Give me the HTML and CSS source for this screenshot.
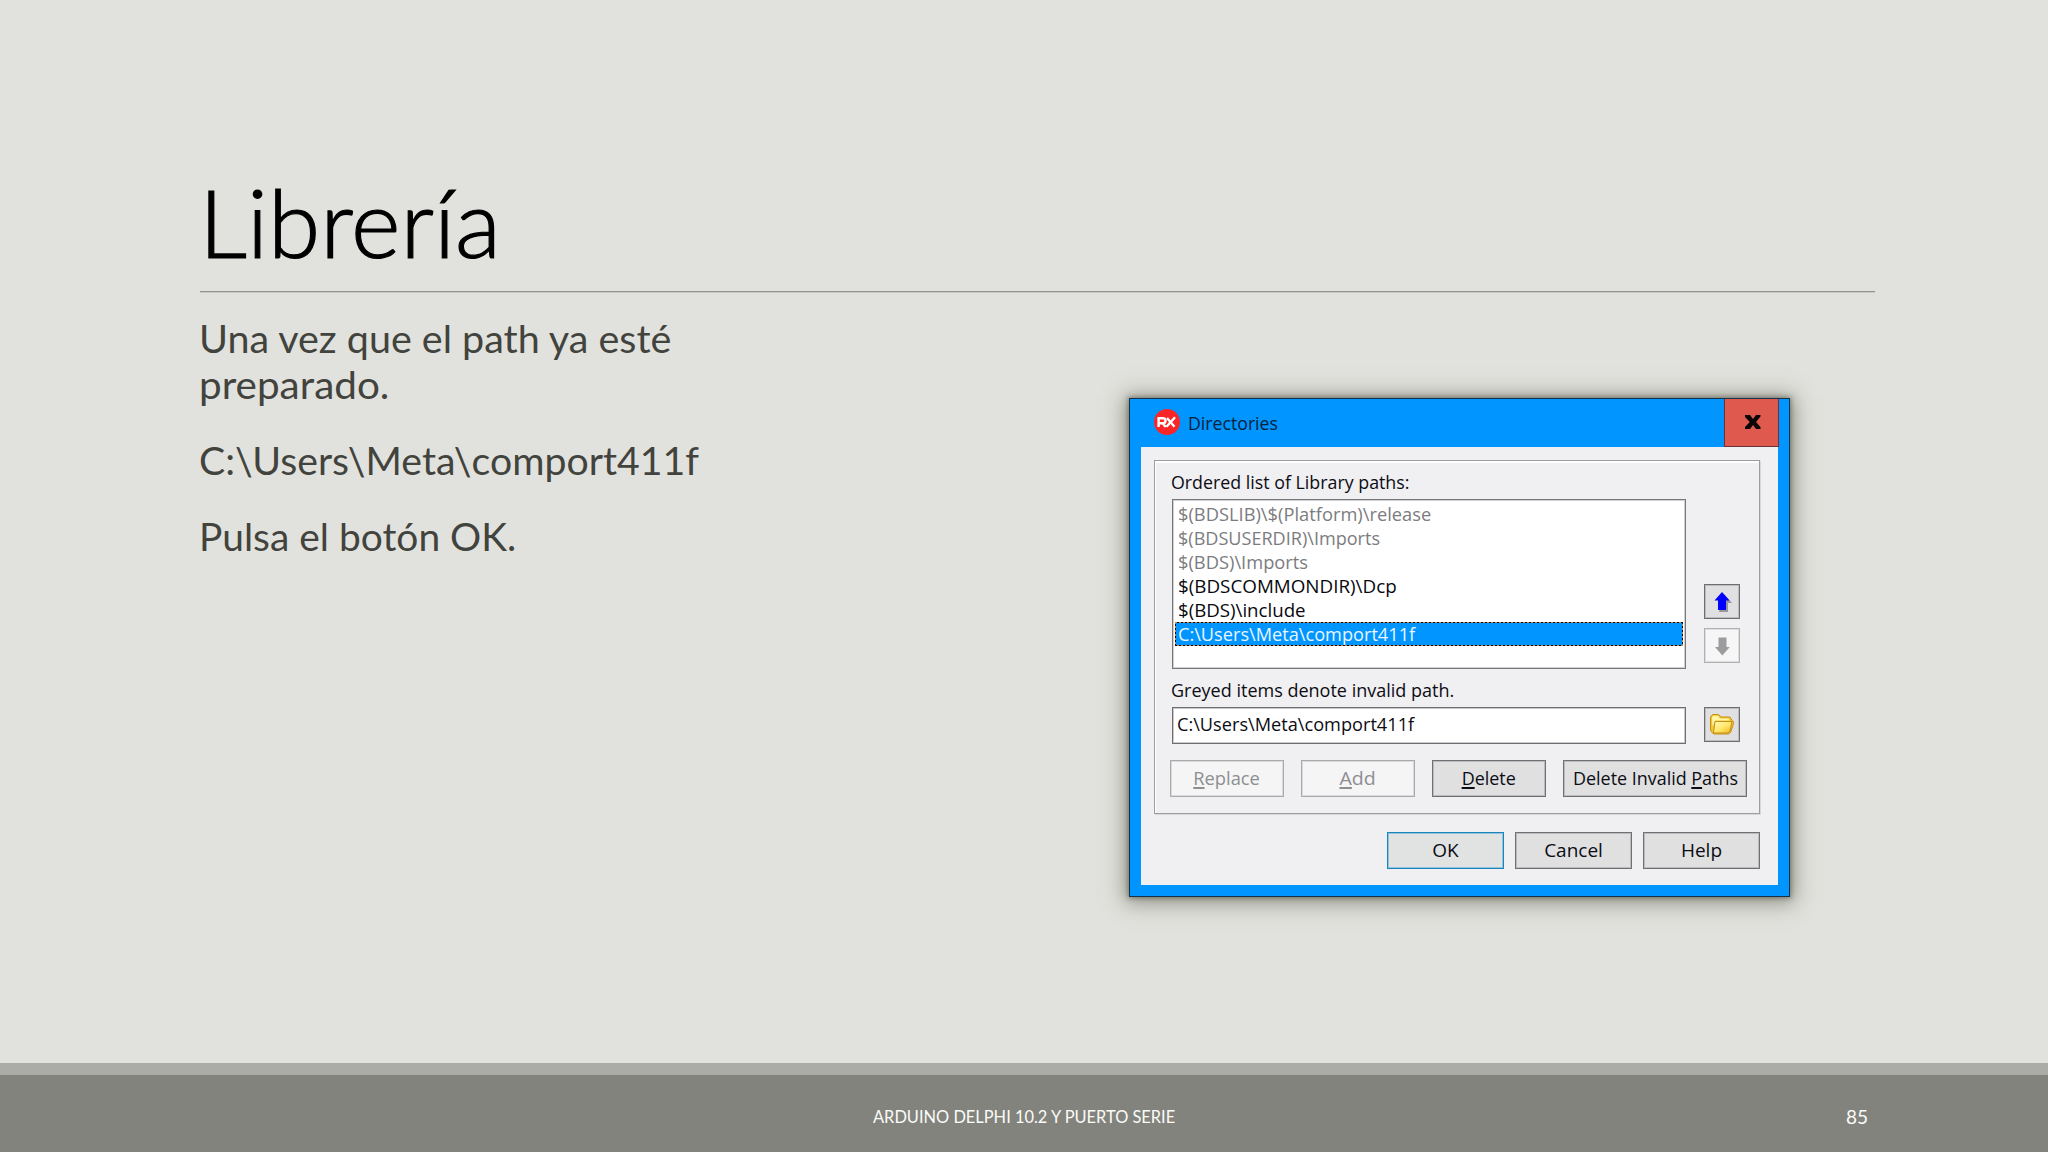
FILE: index.html
```
<!DOCTYPE html>
<html lang="es">
<head>
<meta charset="utf-8">
<title>Librería</title>
<link rel="stylesheet" href="styles.css">
</head>
<body>
<div class="slide">
  <header class="heading"><h1 class="fit title">Librería</h1></header>
  <main class="content">
    <section class="text">
      <p><span class="fit t-a">Una vez que el path ya esté</span><br><span class="fit t-b">preparado.</span></p>
      <p><span class="fit t-c">C:\Users\Meta\comport411f</span></p>
      <p><span class="fit t-d">Pulsa el botón OK.</span></p>
    </section>
    <section class="dialog">
      <div class="titlebar">
        <svg class="logo" viewBox="0 0 26 26"><circle cx="13" cy="13" r="13" fill="#fb2528"/><g fill="none" stroke="#fff" stroke-width="2.4"><path d="M4.6 18V9.2H9a2 2 0 0 1 0 5H5M8.600 14.200l3.200 3.800"/><path d="M13 9l7.500 8.800M21 8.200l-8.500 9.600"/></g></svg>
        <span class="fit caption">Directories</span>
        <span class="close"><svg viewBox="0 0 16 14"><path d="M0 0h5l3 4 3-4h4.500v1.500L11 7l4.500 5v2H11L8 10l-3 4H0v-2l4.800-5L0 2z" fill="#0a0505"/></svg></span>
      </div>
      <div class="client">
        <div class="group">
          <div class="label"><span class="fit l-a">Ordered list of Library paths:</span></div>
          <div class="listrow">
            <ul class="list">
              <li class="invalid"><span class="fit r-a">$(BDSLIB)\$(Platform)\release</span></li>
              <li class="invalid"><span class="fit r-b">$(BDSUSERDIR)\Imports</span></li>
              <li class="invalid"><span class="fit r-c">$(BDS)\Imports</span></li>
              <li><span class="fit r-d">$(BDSCOMMONDIR)\Dcp</span></li>
              <li><span class="fit r-e">$(BDS)\include</span></li>
              <li class="selected"><span class="fit r-f">C:\Users\Meta\comport411f</span></li>
            </ul>
            <div class="movers">
              <span class="tool"><svg viewBox="0 0 36 35"><path d="M20 10l8 9h-4v9h-9z" fill="#98989c"/><path d="M18 8l7.500 8.500H22V26h-8v-9.500h-3.500z" fill="#00f"/></svg></span>
              <span class="tool off"><svg viewBox="0 0 36 35"><path d="M14.500 9.500h8V19h3.300L18.300 27.500 11 19h3.500z" fill="#9c9c9e"/></svg></span>
            </div>
          </div>
          <div class="label second"><span class="fit l-b">Greyed items denote invalid path.</span></div>
          <div class="inputrow">
            <div class="input"><span class="fit r-f">C:\Users\Meta\comport411f</span></div>
            <span class="tool"><svg viewBox="0 0 36 35">
              <defs><linearGradient id="gold" x1="0" y1="0" x2="1" y2="1"><stop offset="0" stop-color="#fffbc0"/><stop offset=".55" stop-color="#ffe566"/><stop offset="1" stop-color="#eeb01c"/></linearGradient></defs>
              <path d="M8 25.500L6.500 23V10l2-2.500h6l2.500 2.500h9l2 3.500 1.500 1-.5 4-2.500 7-2 1.500H10z" fill="#f3c52e" stroke="#c4901c"/>
              <path d="M8 10l1.500-1.300h4L16 11.500h9v2H11L8.500 20z" fill="#fff6a8"/>
              <path d="M11 14.500h17l-2 9.500-2 2H9.500z" fill="url(#gold)" stroke="#c4901c"/>
            </svg></span>
          </div>
          <div class="actions">
            <span class="btn off"><span class="fit b-a"><u>R</u>eplace</span></span>
            <span class="btn off"><span class="fit b-b"><u>A</u>dd</span></span>
            <span class="btn"><span class="fit b-c"><u>D</u>elete</span></span>
            <span class="btn"><span class="fit b-c">Delete Invalid <u>P</u>aths</span></span>
          </div>
        </div>
        <div class="confirm">
          <span class="btn default">OK</span>
          <span class="btn">Cancel</span>
          <span class="btn">Help</span>
        </div>
      </div>
    </section>
  </main>
  <footer class="footer"><span class="fit foot">ARDUINO DELPHI 10.2 Y PUERTO SERIE</span><span class="fit page">85</span></footer>
</div>
</body>
</html>
```
FILE: styles.css
```
* { box-sizing: border-box; }
body { margin: 0; }
.slide {
  width: 2048px; height: 1152px; overflow: hidden;
  display: flex; flex-direction: column;
  background: #e1e2dd; color: #42433d;
  font-family: Lato, "Open Sans", sans-serif;
}
/* Text fitted horizontally to its own proportions */
.fit { display: inline-block; white-space: pre; transform-origin: 0 50%; }

.heading { margin: 0 173px 0 200px; height: 292px; padding-top: 167px; border-bottom: 1px solid #91938e; box-shadow: 0 1px #c9cac5; }
.title { margin: 0 0 0 -1px; font-size: 94px; line-height: 110px; font-weight: 300; color: #000; transform: scaleX(1.008); -webkit-text-stroke: 1.2px #000; }

.content { flex: 1; display: flex; justify-content: space-between; padding: 23px 258px 0 199px; }
.text { font-size: 38.5px; line-height: 46px; }
.text p { margin: 0 0 30px; }
.t-a { transform: scaleX(1.025); }
.t-b { transform: scaleX(1.051); }
.t-c { transform: scaleX(1.019); }
.t-d { transform: scaleX(1.011); }

.dialog {
  width: 661px; height: 499px; margin-top: 83px;
  border: 1px solid #16324a; background: #0095ff; padding: 0 11px 11px;
  display: flex; flex-direction: column;
  box-shadow: 0 0 5px 1px rgba(60,60,45,.5), 0 2px 20px 4px rgba(70,70,50,.5);
  font-family: "Open Sans", "Noto Sans", sans-serif; font-size: 19px; line-height: 24px; color: #0c0c14;
}
.titlebar { height: 48px; display: flex; align-items: flex-start; margin-right: -1px; }
.logo { width: 26px; height: 26px; margin: 10px 8px 0 13px; }
.caption { margin-top: 12px; transform: scaleX(.931); color: #06213c; }
.close { margin-left: auto; width: 55px; height: 48px; border: 1px solid #6b3038; border-top: 0; background: #e0594f; display: flex; justify-content: center; padding: 16px 0 0 2px; }
.close svg { width: 16px; height: 14px; }

.client { flex: 1; background: #f0eff1; padding: 13px 18px 0 13px; }
.group { height: 354px; border: 1px solid #9d9da1; box-shadow: inset 1px 1px #fff, inset 0 2px #fff, 1px 1px #d8d8da; padding: 9px 12px 0 15px; }
.label { height: 29px; padding-left: 1px; }
.l-a { transform: scaleX(.937); }
.l-b { transform: scaleX(.948); }
.listrow, .inputrow { display: flex; justify-content: space-between; padding: 0 7px 0 2px; }
.list { width: 514px; height: 170px; margin: 0; padding: 2px; list-style: none; border: 1px solid #77777b; box-shadow: inset 0 0 0 1px #d0d0d2; background: #fff; color: #08080e; }
.list li { height: 24px; padding-left: 3px; }
.list .invalid { color: #7c7c80; }
.list .selected {
  border: 1px dashed transparent; line-height: 22px; color: #eaf6ff; padding-left: 2px;
  background: linear-gradient(#0095ff, #0095ff) padding-box, repeating-conic-gradient(#0a0a14 0 25%, #b98a4a 0 50%) border-box 0 0 / 4px 4px;
}
.r-a { transform: scaleX(.963); }
.r-b { transform: scaleX(.951); }
.r-c { transform: scaleX(.963); }
.r-d { transform: scaleX(.99); }
.r-e { transform: scaleX(.983); }
.r-f { transform: scaleX(.956); }
.movers { display: flex; flex-direction: column; gap: 9px; padding-top: 85px; }
.tool { display: block; width: 36px; height: 35px; border: 1px solid #6e6e72; box-shadow: inset 0 0 0 1px #bcbcbf; background: #e0e0e2; }
.tool svg { display: block; width: 36px; height: 35px; margin: -1px; }
.tool.off { border-color: #b0b0b3; background: #f6f6f7; box-shadow: inset 0 0 0 1px #dedee0; }
.label.second { height: 38px; padding-top: 9px; }
.input { width: 514px; height: 37px; border: 1px solid #6e6e72; box-shadow: inset 0 0 0 1px #cacacc; background: #fff; padding: 4px; }
.actions { display: flex; gap: 17px; margin-top: 16px; }
.btn { height: 37px; border: 1px solid #707074; box-shadow: inset 0 0 0 1px #bcbcbf; background: #e0e0e1; display: flex; align-items: center; justify-content: center; padding-bottom: 1px; }
.btn .fit { transform-origin: 50% 50%; }
.btn.off { color: #8e8e92; background: #f5f5f6; border-color: #aaaaad; box-shadow: inset 0 0 0 1px #dadadc; }
.actions .btn { width: 114px; }
.actions .btn:last-child { width: 184px; }
u { text-decoration-thickness: 2px; text-underline-offset: 2px; }
.b-a { transform: scaleX(.963); }
.b-b { transform: scaleX(1.03); }
.b-c { transform: scaleX(.943); }
.confirm { display: flex; justify-content: flex-end; gap: 11px; padding-top: 18px; }
.confirm .btn { width: 117px; }
.confirm .default { border-color: #1c84b8; box-shadow: inset 0 0 0 1px #8fc4dc; background: #e1e3e3; }

.footer {
  height: 89px; background: #82837d; border-top: 12px solid #abaca7; color: #fbfbf8;
  display: flex; justify-content: space-between; align-items: flex-start; line-height: 24px;
}
.foot { font-size: 17px; margin: 30px 0 0 873px; transform: scaleX(.965); }
.page { font-size: 20px; margin: 29px 179px 0 0; transform: scaleX(.951); }
```
